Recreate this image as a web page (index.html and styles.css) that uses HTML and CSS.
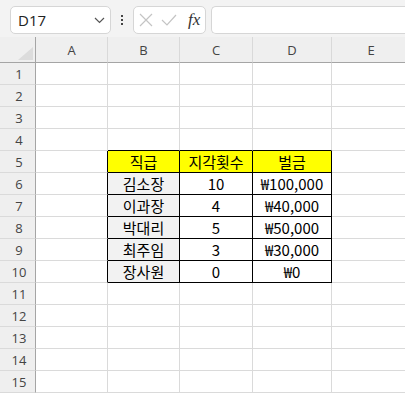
FILE: index.html
```html
<!DOCTYPE html>
<html lang="ko">
<head>
	<meta charset="UTF-8">
	<title>Book1</title>
	<link rel="stylesheet" href="styles.css">
</head>
<body>
	<div id="formulaBar">
		<div class="nameBox">
			<span>D17</span>
			<svg width="11" height="7" viewBox="0 0 11 7"><path d="M1 1 L5.5 5.5 L10 1" fill="none" stroke="#555" stroke-width="1.2"/></svg>
		</div>
		<div class="dots"><i></i><i></i><i></i></div>
		<div class="fxButtons">
			<svg width="14" height="14" viewBox="0 0 14 14"><path d="M1 1 L13 13 M13 1 L1 13" stroke="#c4c4c4" stroke-width="1.2" fill="none"/></svg>
			<svg width="16" height="14" viewBox="0 0 16 14"><path d="M1 7 L6 12 L15 2" stroke="#c4c4c4" stroke-width="1.2" fill="none"/></svg>
			<span class="fx">fx</span>
		</div>
		<div class="formulaInput"></div>
	</div>

	<div id="sheet">
		<div class="corner"><b></b></div>
		<div class="colHead">A</div>
		<div class="colHead">B</div>
		<div class="colHead">C</div>
		<div class="colHead">D</div>
		<div class="colHead">E</div>

		<div class="rowHead">1</div><div class="c"></div><div class="c"></div><div class="c"></div><div class="c"></div><div class="c"></div>
		<div class="rowHead">2</div><div class="c"></div><div class="c"></div><div class="c"></div><div class="c"></div><div class="c"></div>
		<div class="rowHead">3</div><div class="c"></div><div class="c"></div><div class="c"></div><div class="c"></div><div class="c"></div>
		<div class="rowHead">4</div><div class="c"></div><div class="c b"></div><div class="c b"></div><div class="c b"></div><div class="c"></div>

		<div class="rowHead">5</div><div class="c r"></div>
		<div class="c t yellow">직급</div><div class="c t yellow">지각횟수</div><div class="c t yellow">벌금</div><div class="c"></div>

		<div class="rowHead">6</div><div class="c r"></div>
		<div class="c t gray">김소장</div><div class="c t">10</div><div class="c t">₩100,000</div><div class="c"></div>
		<div class="rowHead">7</div><div class="c r"></div>
		<div class="c t gray">이과장</div><div class="c t">4</div><div class="c t">₩40,000</div><div class="c"></div>
		<div class="rowHead">8</div><div class="c r"></div>
		<div class="c t gray">박대리</div><div class="c t">5</div><div class="c t">₩50,000</div><div class="c"></div>
		<div class="rowHead">9</div><div class="c r"></div>
		<div class="c t gray">최주임</div><div class="c t">3</div><div class="c t">₩30,000</div><div class="c"></div>
		<div class="rowHead">10</div><div class="c r"></div>
		<div class="c t gray">장사원</div><div class="c t">0</div><div class="c t">₩0</div><div class="c"></div>

		<div class="rowHead">11</div><div class="c"></div><div class="c"></div><div class="c"></div><div class="c"></div><div class="c"></div>
		<div class="rowHead">12</div><div class="c"></div><div class="c"></div><div class="c"></div><div class="c"></div><div class="c"></div>
		<div class="rowHead">13</div><div class="c"></div><div class="c"></div><div class="c"></div><div class="c"></div><div class="c"></div>
		<div class="rowHead">14</div><div class="c"></div><div class="c"></div><div class="c"></div><div class="c"></div><div class="c"></div>
		<div class="rowHead">15</div><div class="c"></div><div class="c"></div><div class="c"></div><div class="c"></div><div class="c"></div>
	</div>
</body>
</html>
```

FILE: styles.css
```css
* {
	margin: 0;
	padding: 0;
	box-sizing: border-box;
}
body {
	width: 405px;
	height: 393px;
	overflow: hidden;
	background: #fff;
	font-family: "Open Sans", "Noto Sans", sans-serif;
}

/* top bar with name box and formula input */
#formulaBar {
	height: 37px;
	background: #f3f3f3;
	display: flex;
	align-items: flex-start;
	padding: 6px 0 0 10px;
}
.nameBox {
	width: 101px;
	height: 28px;
	background: #fff;
	border: 1px solid #d6d6d6;
	border-radius: 5px;
	display: flex;
	align-items: center;
	justify-content: space-between;
	padding: 0 5px 0 7px;
	font-size: 15px;
	color: #222;
}
.dots {
	width: 22px;
	height: 28px;
	display: flex;
	flex-direction: column;
	align-items: center;
	justify-content: center;
	gap: 2px;
}
.dots i {
	display: block;
	width: 2px;
	height: 2px;
	background: #444;
}
.fxButtons {
	width: 73px;
	height: 28px;
	background: #fff;
	border: 1px solid #d6d6d6;
	border-radius: 5px;
	display: flex;
	align-items: center;
	gap: 8px;
	padding-left: 5px;
}
.fx {
	font-family: "Liberation Serif", "DejaVu Serif", serif;
	font-style: italic;
	font-size: 17px;
	color: #333;
	margin-left: 3px;
}
.formulaInput {
	flex: 1;
	height: 28px;
	margin-left: 5px;
	background: #fff;
	border: 1px solid #d6d6d6;
	border-right: 0;
	border-radius: 5px 0 0 5px;
}

/* the grid */
#sheet {
	display: grid;
	grid-template-columns: 36px 72px 72px 73px 79px 79px;
	grid-template-rows: 26px;
	grid-auto-rows: 22px;
	width: 411px;
}
.corner, .colHead, .rowHead {
	background: #efefef;
	color: #444;
	font-size: 13px;
	display: flex;
	align-items: center;
	justify-content: center;
}
.corner {
	position: relative;
	border-right: 1px solid #a5a5a5;
	border-bottom: 1px solid #a5a5a5;
}
.corner b {
	position: absolute;
	right: 2px;
	bottom: 2px;
	width: 0;
	height: 0;
	border-left: 15px solid transparent;
	border-bottom: 13px solid #dcdcdc;
}
.colHead {
	border-right: 1px solid #d9d9d9;
	border-bottom: 1px solid #a5a5a5;
	padding-top: 1px;
}
.rowHead {
	border-right: 1px solid #a5a5a5;
	border-bottom: 1px solid #dadada;
	padding-left: 3px;
}
.c {
	border-right: 1px solid #dadada;
	border-bottom: 1px solid #dadada;
}
.c.b {
	border-bottom-color: #000;
}
.c.r {
	border-right-color: #000;
}
.c.t {
	border-right-color: #000;
	border-bottom-color: #000;
	display: flex;
	align-items: center;
	justify-content: center;
	font-family: "Noto Sans CJK KR", "Noto Sans", sans-serif;
	font-size: 15px;
	color: #000;
}
.yellow {
	background: #ffff00;
}
.gray {
	background: #f2f2f2;
}
```
